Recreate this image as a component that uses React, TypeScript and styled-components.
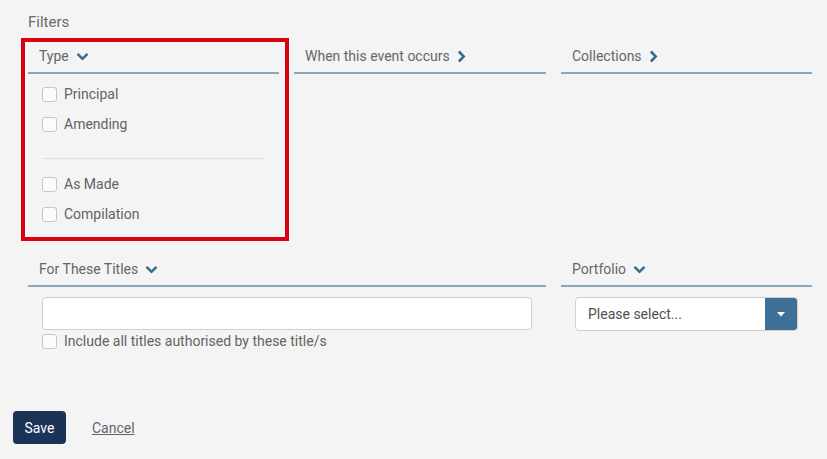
import React, { useState } from 'react';
import styled, { createGlobalStyle } from 'styled-components';

const GlobalStyle = createGlobalStyle`
  html, body {
    margin: 0;
    padding: 0;
    background: #f4f4f4;
    font-family: Roboto, 'Liberation Sans', Arial, sans-serif;
  }
`;

const Chevron = ({ dir }: { dir: 'down' | 'right' }) =>
  dir === 'down' ? (
    <svg width="13" height="9" viewBox="0 0 13 9">
      <polyline points="1.5,1.8 6.5,6.8 11.5,1.8" fill="none" stroke="#3c6a8d" strokeWidth="2.5" strokeLinejoin="miter" />
    </svg>
  ) : (
    <svg width="9" height="13" viewBox="0 0 9 13">
      <polyline points="1.8,1.5 6.8,6.5 1.8,11.5" fill="none" stroke="#3c6a8d" strokeWidth="2.5" strokeLinejoin="miter" />
    </svg>
  );

type CheckProps = { label: string };

const CheckItem = ({ label }: CheckProps) => {
  const [checked, setChecked] = useState(false);
  return (
    <StCheckRow onClick={() => setChecked(!checked)}>
      <StBox checked={checked} />
      <span>{label}</span>
    </StCheckRow>
  );
};

const App = () => {
  return (
    <>
      <GlobalStyle />
      <StPage>
        <StTitle>Filters</StTitle>

        <StGrid>
          <StColumn>
            <StHeader>
              Type <Chevron dir="down" />
            </StHeader>
            <StCheckList>
              <CheckItem label="Principal" />
              <CheckItem label="Amending" />
              <StDivider />
              <CheckItem label="As Made" />
              <CheckItem label="Compilation" />
            </StCheckList>
          </StColumn>
          <StColumn>
            <StHeader>
              When this event occurs <Chevron dir="right" />
            </StHeader>
          </StColumn>
          <StColumn>
            <StHeader>
              Collections <Chevron dir="right" />
            </StHeader>
          </StColumn>
        </StGrid>

        <StGrid second>
          <StColumn span={2}>
            <StHeader>
              For These Titles <Chevron dir="down" />
            </StHeader>
            <StFieldBody>
              <StInput type="text" />
              <StTightRow>
                <CheckItem label="Include all titles authorised by these title/s" />
              </StTightRow>
            </StFieldBody>
          </StColumn>
          <StColumn>
            <StHeader>
              Portfolio <Chevron dir="down" />
            </StHeader>
            <StFieldBody>
              <StSelect>
                <span>Please select...</span>
                <StSelectButton>
                  <svg width="8" height="5" viewBox="0 0 8 5">
                    <polygon points="0,0 8,0 4,4.5" fill="#ffffff" />
                  </svg>
                </StSelectButton>
              </StSelect>
            </StFieldBody>
          </StColumn>
        </StGrid>

        <StActions>
          <StSave>Save</StSave>
          <StCancel href="#">Cancel</StCancel>
        </StActions>

        {/* annotation highlight drawn over the Type filter */}
        <StHighlight />
      </StPage>
    </>
  );
};

export default App;

const StPage = styled.div`
  position: relative;
  width: 827px;
  height: 459px;
  box-sizing: border-box;
  padding: 12px 15px 0 28px;
`;

const StTitle = styled.div`
  font-size: 15px;
  line-height: 20px;
  color: #6a6a6a;
`;

const StGrid = styled.div<{ second?: boolean }>`
  display: grid;
  grid-template-columns: 251px 252px 251px;
  column-gap: 15px;
  margin-top: ${(props) => (props.second ? '24px' : '8px')};
`;

const StColumn = styled.div<{ span?: number }>`
  grid-column: span ${(props) => props.span || 1};
`;

const StHeader = styled.div`
  display: flex;
  align-items: center;
  gap: 7px;
  height: 32px;
  padding-left: 11px;
  font-size: 14px;
  color: #666666;
  border-bottom: 2px solid #8ba6b8;
`;

const StCheckList = styled.div`
  display: flex;
  flex-direction: column;
  padding: 5px 14px 0 14px;
`;

const StCheckRow = styled.label`
  display: flex;
  align-items: center;
  gap: 7px;
  height: 30px;
  font-size: 14px;
  color: #636363;
  cursor: pointer;
`;

const StBox = styled.span<{ checked: boolean }>`
  width: 13px;
  height: 13px;
  border: 1px solid #c6c6c6;
  border-radius: 3px;
  background: ${(props) => (props.checked ? '#3c6a8d' : '#fbfbfb')};
  flex-shrink: 0;
`;

const StDivider = styled.div`
  height: 1px;
  background: #dcdfe3;
  margin: 19px 0 10px 0;
  width: 223px;
`;

const StFieldBody = styled.div`
  padding: 10px 14px 0 14px;
`;

const StInput = styled.input`
  display: block;
  width: 100%;
  height: 33px;
  box-sizing: border-box;
  border: 1px solid #cfcfcf;
  border-radius: 4px;
  background: #ffffff;
  outline: none;
`;

const StTightRow = styled.div`
  margin-top: -4px;
`;

const StSelect = styled.div`
  display: flex;
  align-items: stretch;
  height: 34px;
  box-sizing: border-box;
  border: 1px solid #cfcfcf;
  border-radius: 4px;
  background: #ffffff;
  overflow: hidden;

  span {
    flex: 1;
    display: flex;
    align-items: center;
    padding-left: 12px;
    font-size: 14px;
    color: #4f4f4f;
  }
`;

const StSelectButton = styled.div`
  width: 32px;
  display: flex;
  align-items: center;
  justify-content: center;
  background: #3f6f94;
`;

const StActions = styled.div`
  display: flex;
  align-items: center;
  gap: 26px;
  margin-top: 55px;
  margin-left: -15px;
`;

const StSave = styled.button`
  width: 53px;
  height: 33px;
  border: none;
  border-radius: 4px;
  background: #1b3357;
  color: #ffffff;
  font-family: Roboto, 'Liberation Sans', Arial, sans-serif;
  font-size: 14px;
  cursor: pointer;
`;

const StCancel = styled.a`
  font-size: 14px;
  color: #5c6370;
  text-decoration: underline;
`;

const StHighlight = styled.div`
  position: absolute;
  left: 21px;
  top: 38px;
  width: 268px;
  height: 203px;
  box-sizing: border-box;
  border: 4px solid #d90010;
  pointer-events: none;
`;
